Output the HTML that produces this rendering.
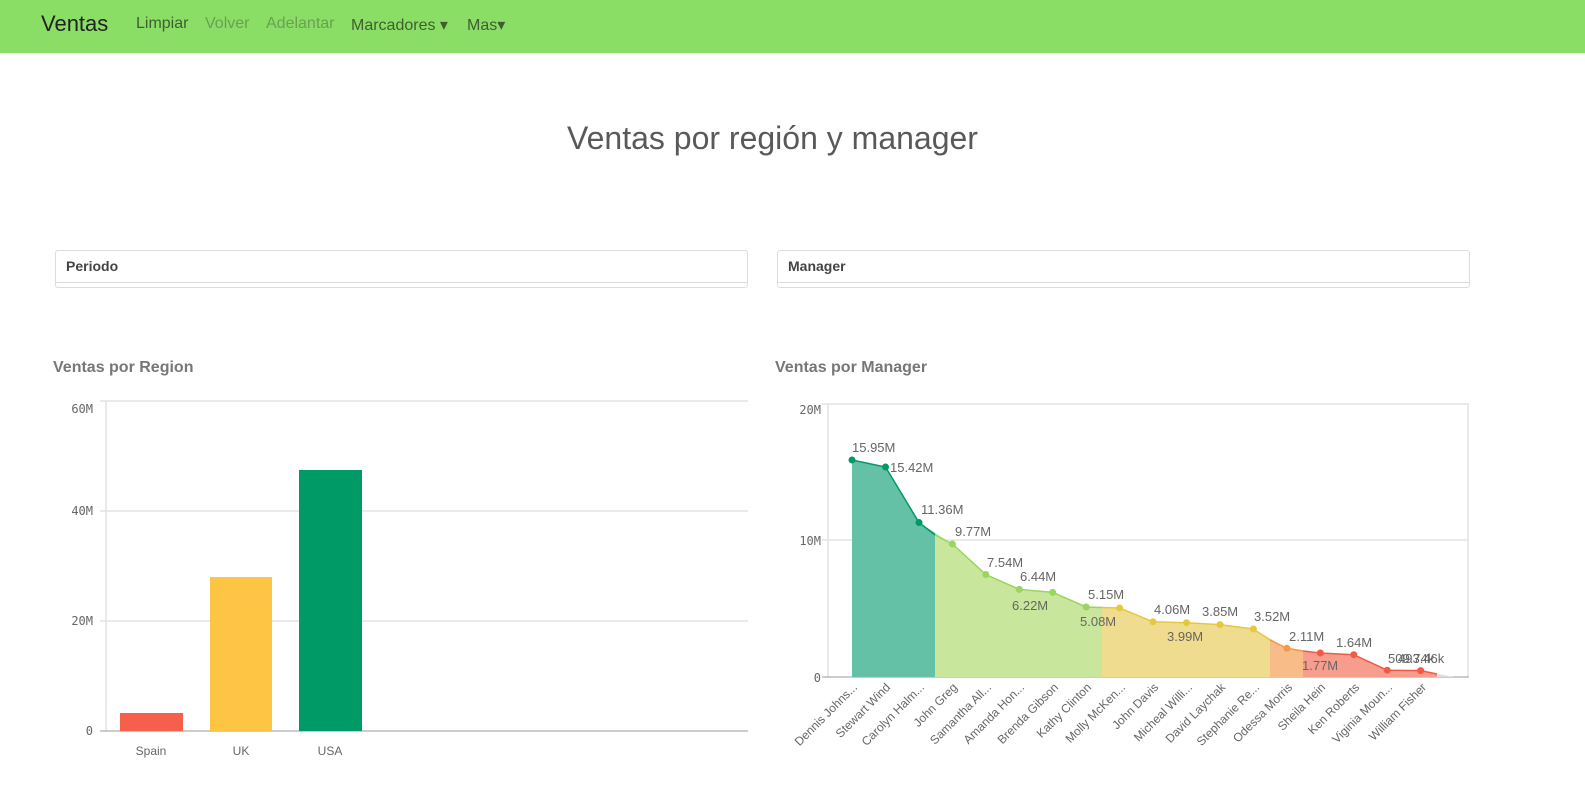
<!DOCTYPE html>
<html><head><meta charset="utf-8"><style>
body{margin:0;width:1585px;height:799px;background:#fff;font-family:"Liberation Sans",sans-serif;overflow:hidden;position:relative}
.nav{position:absolute;left:0;top:0;width:1585px;height:53px;background:#8ade65}
.nav span{position:absolute;top:15px;font-size:16px}
.t{position:absolute;top:120px;width:1585px;text-align:center;font-size:32px;color:#595959;left:-20px}
.box{position:absolute;top:250px;height:36px;border:1px solid #ddd;border-radius:3px;width:691px}
.box div{height:31px;border-bottom:1px solid #ddd;font-weight:bold;font-size:14px;color:#444;line-height:31px;padding-left:10px}
.h{position:absolute;top:359px;font-weight:bold;font-size:16px;color:#777}
svg{position:absolute;left:0;top:0}
svg text{font-family:"DejaVu Sans Mono","Liberation Mono",monospace;font-size:12px;fill:#666}
svg text.s{font-family:"Liberation Sans",sans-serif;font-size:12px;fill:#666}
svg text.v{font-family:"Liberation Sans",sans-serif;font-size:13px;fill:#666}
</style></head><body>
<div class="nav">
<span style="left:41px;top:11px;font-size:22px;color:#222">Ventas</span>
<span style="left:136px;color:#3f5e2f">Limpiar</span>
<span style="left:205px;color:#6aa04f">Volver</span>
<span style="left:266px;color:#6aa04f">Adelantar</span>
<span style="left:351px;color:#3f5e2f">Marcadores ▾</span>
<span style="left:467px;color:#3f5e2f">Mas▾</span>
</div>
<div class="t">Ventas por región y manager</div>
<div class="box" style="left:55px"><div>Periodo</div></div>
<div class="box" style="left:777px"><div>Manager</div></div>
<div class="h" style="left:53px">Ventas por Region</div>
<div class="h" style="left:775px">Ventas por Manager</div>
<svg width="1585" height="799">
<g stroke="#e3e3e3" stroke-width="1.5">
<line x1="100" y1="401" x2="748" y2="401"/><line x1="100" y1="511" x2="748" y2="511"/><line x1="100" y1="621" x2="748" y2="621"/>
<line x1="106" y1="401" x2="106" y2="731"/>
<line x1="822" y1="404" x2="1469" y2="404"/><line x1="822" y1="540" x2="1469" y2="540"/><line x1="828" y1="404" x2="828" y2="677"/>
<line x1="1468" y1="404" x2="1468" y2="677"/>
</g>
<line x1="100" y1="731" x2="748" y2="731" stroke="#999"/>
<line x1="822" y1="677" x2="1469" y2="677" stroke="#999"/>
<text x="93" y="413" text-anchor="end">60M</text><text x="93" y="515" text-anchor="end">40M</text><text x="93" y="625" text-anchor="end">20M</text><text x="93" y="735" text-anchor="end">0</text>
<rect x="120" y="713" width="63" height="18" fill="#f65f4c"/>
<rect x="210" y="577" width="62" height="154" fill="#fec443"/>
<rect x="299" y="470" width="63" height="261" fill="#009a67"/>
<text class="s" x="151" y="755" text-anchor="middle">Spain</text>
<text class="s" x="241" y="755" text-anchor="middle">UK</text>
<text class="s" x="330" y="755" text-anchor="middle">USA</text>
<text x="821" y="414" text-anchor="end">20M</text><text x="821" y="545" text-anchor="end">10M</text><text x="821" y="682" text-anchor="end">0</text>
<defs><clipPath id="a"><polygon points="852,460 885.5,467 919,522.5 952.4,544 985.8,574.5 1019.3,589.4 1052.7,592.4 1086.2,607 1119.6,608 1153,621.8 1186.5,622.7 1220,624.6 1253.4,629 1286.9,648.3 1320.3,653 1353.8,654.7 1387.2,670.2 1420.7,670.6 1454,677 852,677"/></clipPath></defs>
<g clip-path="url(#a)">
<rect x="852" y="400" width="83" height="280" fill="#65c1a6"/>
<rect x="935" y="400" width="167" height="280" fill="#c8e69c"/>
<rect x="1102" y="400" width="168" height="280" fill="#f0dc8e"/>
<rect x="1270" y="400" width="33" height="280" fill="#f8bc88"/>
<rect x="1303" y="400" width="134" height="280" fill="#f79d8e"/>
<rect x="1437" y="400" width="20" height="280" fill="#ddd"/>
</g>
<polyline fill="none" stroke="#009a67" stroke-width="1.5" points="852,460 885.5,467 919,522.5 935,535"/>
<polyline fill="none" stroke="#9ad55e" stroke-width="1.5" points="935,535 952.4,544 985.8,574.5 1019.3,589.4 1052.7,592.4 1086.2,607 1102,607.5"/>
<polyline fill="none" stroke="#e6c840" stroke-width="1.5" points="1102,607.5 1119.6,608 1153,621.8 1186.5,622.7 1220,624.6 1253.4,629 1270,640"/>
<polyline fill="none" stroke="#f4974a" stroke-width="1.5" points="1270,640 1286.9,648.3 1303,651"/>
<polyline fill="none" stroke="#f25a46" stroke-width="1.5" points="1303,651 1320.3,653 1353.8,654.7 1387.2,670.2 1420.7,670.6 1437,674"/>
<g fill="#009a67"><circle cx="852" cy="460" r="3.5"/><circle cx="885.5" cy="467" r="3.5"/><circle cx="919" cy="522.5" r="3.5"/></g>
<g fill="#9ad55e"><circle cx="952.4" cy="544" r="3.5"/><circle cx="985.8" cy="574.5" r="3.5"/><circle cx="1019.3" cy="589.4" r="3.5"/><circle cx="1052.7" cy="592.4" r="3.5"/><circle cx="1086.2" cy="607" r="3.5"/></g>
<g fill="#e6c840"><circle cx="1119.6" cy="608" r="3.5"/><circle cx="1153" cy="621.8" r="3.5"/><circle cx="1186.5" cy="622.7" r="3.5"/><circle cx="1220" cy="624.6" r="3.5"/><circle cx="1253.4" cy="629" r="3.5"/></g>
<circle cx="1286.9" cy="648.3" r="3.5" fill="#f4974a"/>
<g fill="#f25a46"><circle cx="1320.3" cy="653" r="3.5"/><circle cx="1353.8" cy="654.7" r="3.5"/><circle cx="1387.2" cy="670.2" r="3.5"/><circle cx="1420.7" cy="670.6" r="3.5"/></g>
<text class="v" x="852" y="452">15.95M</text><text class="v" x="890" y="472">15.42M</text><text class="v" x="921" y="514">11.36M</text><text class="v" x="955" y="536">9.77M</text>
<text class="v" x="987" y="567">7.54M</text><text class="v" x="1020" y="581">6.44M</text><text class="v" x="1012" y="610">6.22M</text><text class="v" x="1088" y="599">5.15M</text>
<text class="v" x="1080" y="626">5.08M</text><text class="v" x="1154" y="614">4.06M</text><text class="v" x="1167" y="641">3.99M</text><text class="v" x="1202" y="616">3.85M</text>
<text class="v" x="1254" y="621">3.52M</text><text class="v" x="1289" y="641">2.11M</text><text class="v" x="1302" y="670">1.77M</text><text class="v" x="1336" y="647">1.64M</text>
<text class="v" x="1388" y="663">509.74k</text><text class="v" x="1398" y="663">493.46k</text>
<g text-anchor="end">
<text class="s" transform="translate(858,688) rotate(-45)">Dennis Johns...</text>
<text class="s" transform="translate(891,688) rotate(-45)">Stewart Wind</text>
<text class="s" transform="translate(925,688) rotate(-45)">Carolyn Halm...</text>
<text class="s" transform="translate(958,688) rotate(-45)">John Greg</text>
<text class="s" transform="translate(992,688) rotate(-45)">Samantha All...</text>
<text class="s" transform="translate(1025,688) rotate(-45)">Amanda Hon...</text>
<text class="s" transform="translate(1059,688) rotate(-45)">Brenda Gibson</text>
<text class="s" transform="translate(1092,688) rotate(-45)">Kathy Clinton</text>
<text class="s" transform="translate(1126,688) rotate(-45)">Molly McKen...</text>
<text class="s" transform="translate(1159,688) rotate(-45)">John Davis</text>
<text class="s" transform="translate(1193,688) rotate(-45)">Micheal Willi...</text>
<text class="s" transform="translate(1226,688) rotate(-45)">David Laychak</text>
<text class="s" transform="translate(1260,688) rotate(-45)">Stephanie Re...</text>
<text class="s" transform="translate(1293,688) rotate(-45)">Odessa Morris</text>
<text class="s" transform="translate(1326,688) rotate(-45)">Sheila Hein</text>
<text class="s" transform="translate(1360,688) rotate(-45)">Ken Roberts</text>
<text class="s" transform="translate(1393,688) rotate(-45)">Viginia Moun...</text>
<text class="s" transform="translate(1427,688) rotate(-45)">William Fisher</text>
</g>
</svg>
</body></html>
